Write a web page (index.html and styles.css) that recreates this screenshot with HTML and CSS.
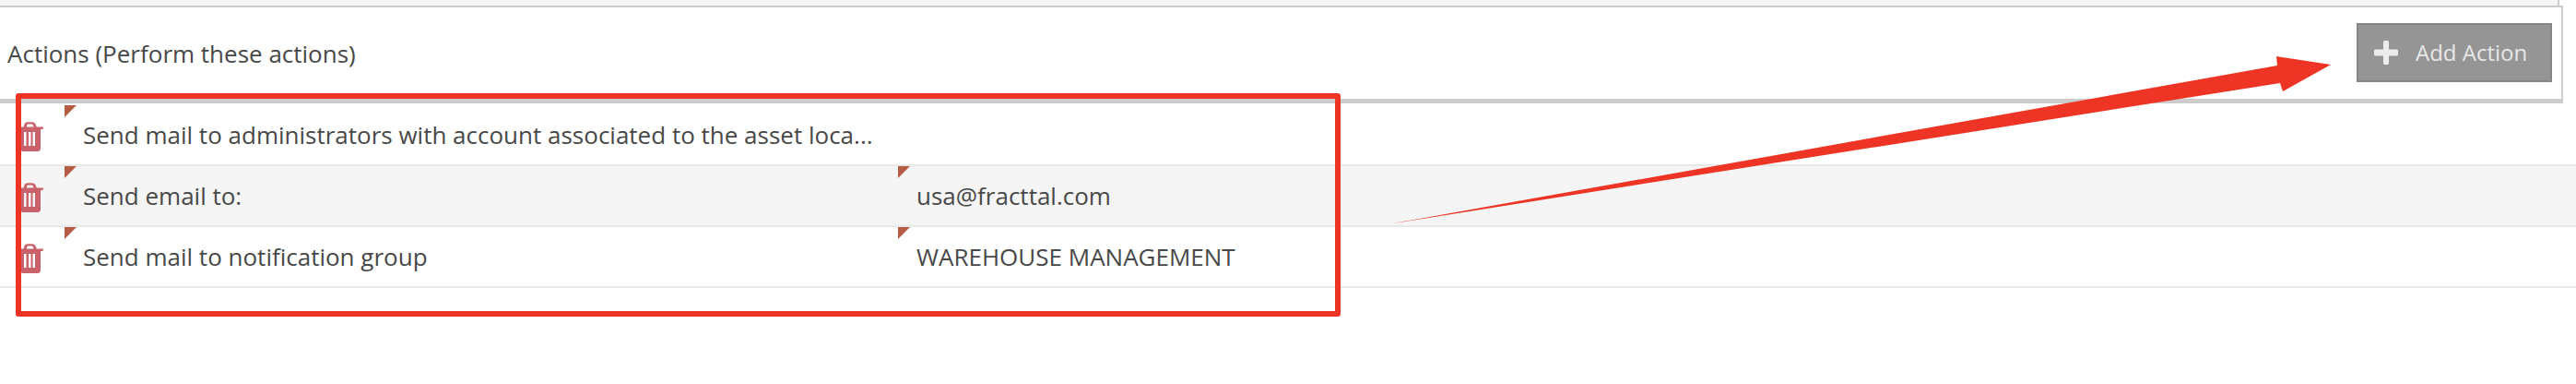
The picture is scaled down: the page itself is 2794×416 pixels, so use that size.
FILE: index.html
```html
<!DOCTYPE html>
<html lang="en">
<head>
<meta charset="utf-8">
<title>Actions</title>
<link rel="stylesheet" href="styles.css">
</head>
<body>
<svg width="0" height="0" class="defs" aria-hidden="true">
  <symbol id="trash" viewBox="0 0 27 32">
    <path class="trash-shape" fill-rule="evenodd" d="M5.6 5.4 L6.4 2.8 Q7 .2 10 .2 L14.6 .2 Q17.8 .2 18.6 2.8 L19.8 5.4 L27 5.4 L26.6 8 L24 8 L24 28.6 Q24 32 21 32 L5 32 Q2 32 2 28.6 L2 8 L0 8 L0 5.4 Z M8.8 5.4 L16.6 5.4 L15.8 3.6 Q15.4 2.6 14.2 2.6 L10.4 2.6 Q9.4 2.6 9.2 3.6 Z M6 11 L8.5 11 L8.5 26 L6 26 Z M11 11 L13.5 11 L13.5 26 L11 26 Z M15.5 11 L18 11 L18 26 L15.5 26 Z"/>
  </symbol>
</svg>
<div class="top-strip"></div>
<header class="panel">
  <h2 class="panel-title">Actions (Perform these actions)</h2>
  <button class="add-btn" type="button">
    <svg class="plus" viewBox="0 0 26 26" aria-hidden="true"><path d="M10 1.5 Q10 0 11.5 0 L14.5 0 Q16 0 16 1.5 L16 9.5 L24.5 9.5 Q26 9.5 26 11 L26 15 Q26 16.5 24.5 16.5 L16 16.5 L16 24.5 Q16 26 14.5 26 L11.5 26 Q10 26 10 24.5 L10 16.5 L1.5 16.5 Q0 16.5 0 15 L0 11 Q0 9.5 1.5 9.5 L10 9.5 Z"/></svg>
    <span>Add Action</span>
  </button>
</header>
<main class="rows">
  <div class="row">
    <div class="tool"><svg class="trash"><use href="#trash"/></svg></div>
    <div class="cell cell-name">Send mail to administrators with account associated to the asset loca...</div>
    <div class="cell cell-value"></div>
  </div>
  <div class="row row-alt">
    <div class="tool"><svg class="trash"><use href="#trash"/></svg></div>
    <div class="cell cell-name">Send email to:</div>
    <div class="cell cell-value">usa@fracttal.com</div>
  </div>
  <div class="row">
    <div class="tool"><svg class="trash"><use href="#trash"/></svg></div>
    <div class="cell cell-name">Send mail to notification group</div>
    <div class="cell cell-value">WAREHOUSE MANAGEMENT</div>
  </div>
</main>
<div class="annot-box"></div>
<svg class="annot-arrow" viewBox="0 0 2794 416" aria-hidden="true">
  <path d="M1511 242 L2470 71 L2469 61 L2528 70 L2476 99 L2473 90 Z"/>
</svg>
</body>
</html>
```
FILE: styles.css
```css
* { box-sizing: border-box; }
html, body { margin: 0; padding: 0; background: #fff; }
body {
  position: relative;
  width: 2794px;
  height: 416px;
  overflow: hidden;
  font-family: "Open Sans", "Liberation Sans", sans-serif;
  font-size: 26px;
  color: #484848;
}
.defs { position: absolute; }
.top-strip {
  width: 2776px;
  height: 8px;
  background: #f5f5f5;
  border-right: 2px solid #ccc;
  border-bottom: 2px solid #ccc;
  margin-bottom: -2px;
}
.panel {
  width: 2780px;
  height: 106px;
  background: #fff;
  border-top: 2px solid #ccc;
  border-right: 2px solid #ccc;
  border-bottom: 5px solid #ccc;
  display: flex;
  align-items: center;
  justify-content: space-between;
  padding: 0 10px 0 8px;
}
.panel-title { margin: 0; font-size: 26px; font-weight: 400; color: #484848; }
.add-btn {
  width: 212px;
  height: 64px;
  margin-top: -2px;
  background: #959595;
  border: 2px solid #858585;
  color: #e8e8e8;
  font: inherit;
  font-size: 24px;
  display: flex;
  align-items: center;
  gap: 19px;
  padding: 0 0 0 17px;
}
.plus { width: 26px; height: 26px; fill: #ececec; flex: none; }
.rows { margin-top: 2px; }
.row {
  display: flex;
  height: 66px;
  border-bottom: 2px solid #e8e8e8;
  background: #fff;
}
.row-alt { background: #f5f5f5; }
.tool {
  width: 70px;
  flex: none;
  padding: 18px 0 0 20px;
}
.trash { display: block; width: 27px; height: 32px; }
.trash-shape { fill: #c9626a; }
.cell {
  position: relative;
  padding: 14px 0 0 20px;
  line-height: 36px;
  white-space: nowrap;
}
.cell::before {
  content: "";
  position: absolute;
  left: 0;
  top: 0;
  border-top: 13px solid #b55c45;
  border-right: 13px solid transparent;
}
.cell-name { width: 904px; flex: none; }
.row:first-child .cell-value::before { display: none; }
.cell-value { flex: 1; }
.annot-box {
  position: absolute;
  left: 17px;
  top: 101px;
  width: 1437px;
  height: 242px;
  border: 6px solid #ee3424;
  border-radius: 3px;
}
.annot-arrow {
  position: absolute;
  left: 0;
  top: 0;
  width: 2794px;
  height: 416px;
  fill: #ee3424;
}
```
